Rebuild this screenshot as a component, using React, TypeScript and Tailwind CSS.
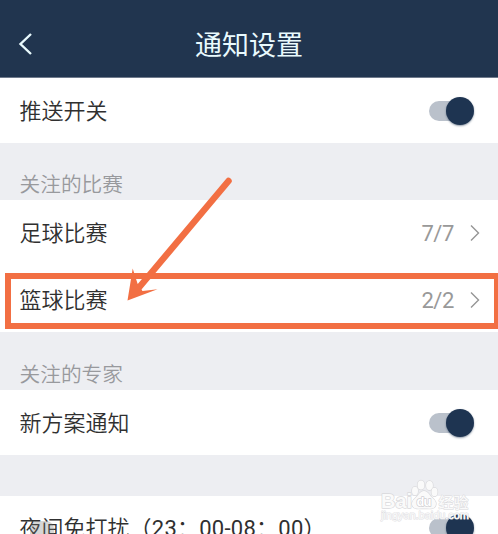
import { ReactNode } from "react";

function Section({ label, className }: { label?: string; className: string }) {
  return (
    <div className={`flex items-end bg-[#edeef2] px-[19.5px] text-[20.7px] font-[350] leading-[30px] text-[#98999d] ${className}`}>
      {label}
    </div>
  );
}

function Row({ title, className, children }: { title: ReactNode; className: string; children: ReactNode }) {
  return (
    <div className={`flex items-center justify-between pl-[19.5px] ${className}`}>
      <span className="pt-[2px] text-[22px] font-[350] leading-[32px] text-[#303030]">{title}</span>
      {children}
    </div>
  );
}

function Toggle() {
  return (
    <span className="mr-[24px] flex h-[28px] w-[45px] items-center rounded-full">
      <span className="h-[20px] w-[34px] shrink-0 rounded-full bg-[#bac1cb]" />
      <span className="-ml-[17px] size-[28px] shrink-0 rounded-full bg-[#1e3451] shadow-[0_1px_2px_rgba(30,52,81,0.5)]" />
    </span>
  );
}

function Count({ value }: { value: string }) {
  return (
    <span className="mr-[18px] flex items-center">
      <span className="pt-[2px] font-[Roboto] text-[22px] font-normal leading-[32px] tracking-[-0.4px] text-[#999]">{value}</span>
      <svg className="ml-[16px]" width="10" height="18" viewBox="0 0 10 18" fill="none" stroke="#959595" strokeWidth="1.4">
        <path d="M1 1.500 8.500 9 1 16.500" />
      </svg>
    </span>
  );
}

function Watermark() {
  return (
    <svg
      className="absolute left-[374px] top-[474px]"
      width="124"
      height="56"
      viewBox="0 0 124 56"
      fill="#fafafa"
      stroke="#d9d9dc"
      strokeWidth="1.4"
      strokeLinejoin="round"
      paintOrder="stroke"
    >
      <g fontFamily="'Liberation Sans', sans-serif" fontWeight="700">
        <text x="7" y="34" fontSize="20" textLength="31" lengthAdjust="spacingAndGlyphs">Bai</text>
        <ellipse cx="41" cy="17" rx="3" ry="4.2" />
        <ellipse cx="47" cy="11" rx="3.4" ry="4.6" />
        <ellipse cx="55.5" cy="11.5" rx="3.4" ry="4.6" />
        <ellipse cx="60.5" cy="18" rx="3" ry="4.2" />
        <path d="M50 17c-4 0-5 4-8 6.500s-5 5-3.500 8.500 6 2.500 11.500 2.500 10 1 11.500-2.500-.5-6-3.500-8.500-4-6.500-8-6.500Z" />
        <text x="42.500" y="31.500" fontSize="13" textLength="15" fill="#fff" stroke="#cfcfd3">du</text>
      </g>
      <text x="64.500" y="33.500" fontSize="15" fontWeight="500" strokeWidth="1" fontFamily="'Noto Sans CJK SC', sans-serif">经验</text>
      <text x="7" y="45" fontSize="11" textLength="88" stroke="#e0e0e3" strokeWidth="1" fontFamily="'Liberation Sans', sans-serif">
        jingyan.baidu.com
      </text>
    </svg>
  );
}

export default function App() {
  return (
    <div className="relative flex h-[534px] w-[498px] flex-col overflow-hidden bg-white font-[Roboto,'Noto_Sans_CJK_SC',sans-serif]">
      <header className="grid h-[78px] shrink-0 grid-cols-[1fr_auto_1fr] items-center border-b border-[#6f7a8c] bg-[#21354f] pt-[10px]">
        <svg className="ml-[17px]" width="16" height="24" viewBox="0 0 16 24" fill="none" stroke="#e9fafd" strokeWidth="2.4">
          <path d="M14 2 3.500 12 14 22" />
        </svg>
        <h1 className="pt-[5px] text-[27px] font-normal leading-[40px] text-[#e9fafd]">通知设置</h1>
      </header>

      <Row title="推送开关" className="h-[65px] shrink-0">
        <Toggle />
      </Row>
      <Section label="关注的比赛" className="h-[57px] shrink-0" />
      <Row title="足球比赛" className="h-[66px] shrink-0">
        <Count value="7/7" />
      </Row>
      <Row title="篮球比赛" className="h-[66px] shrink-0 pt-[2px]">
        <Count value="2/2" />
      </Row>
      <Section label="关注的专家" className="h-[58px] shrink-0" />
      <Row title="新方案通知" className="h-[65px] shrink-0">
        <Toggle />
      </Row>
      <Section className="h-[41px] shrink-0" />
      <Row
        title={
          <>
            夜间免打扰<span className="font-normal tracking-[0.25px]">（23：00-08：00）</span>
          </>
        }
        className="h-[64px] shrink-0"
      >
        <Toggle />
      </Row>

      <div className="absolute left-[4.500px] top-[272.500px] h-[56px] w-[495px] border-[6px] border-[#f26f43]" />
      <svg className="absolute left-0 top-0" width="498" height="534" viewBox="0 0 498 534">
        <path d="M228.500 181 139 287.500" stroke="#f26f43" strokeWidth="6.500" strokeLinecap="round" />
        <path d="M127.500 300.500 132.700 268.500 137.500 283.500 142.500 291 157.500 289.300Z" fill="#f26f43" />
      </svg>
      <div className="absolute left-[30px] top-[521px] h-[20px] w-[24px] rounded-t-lg bg-[#777]/30" />
      <Watermark />
    </div>
  );
}
